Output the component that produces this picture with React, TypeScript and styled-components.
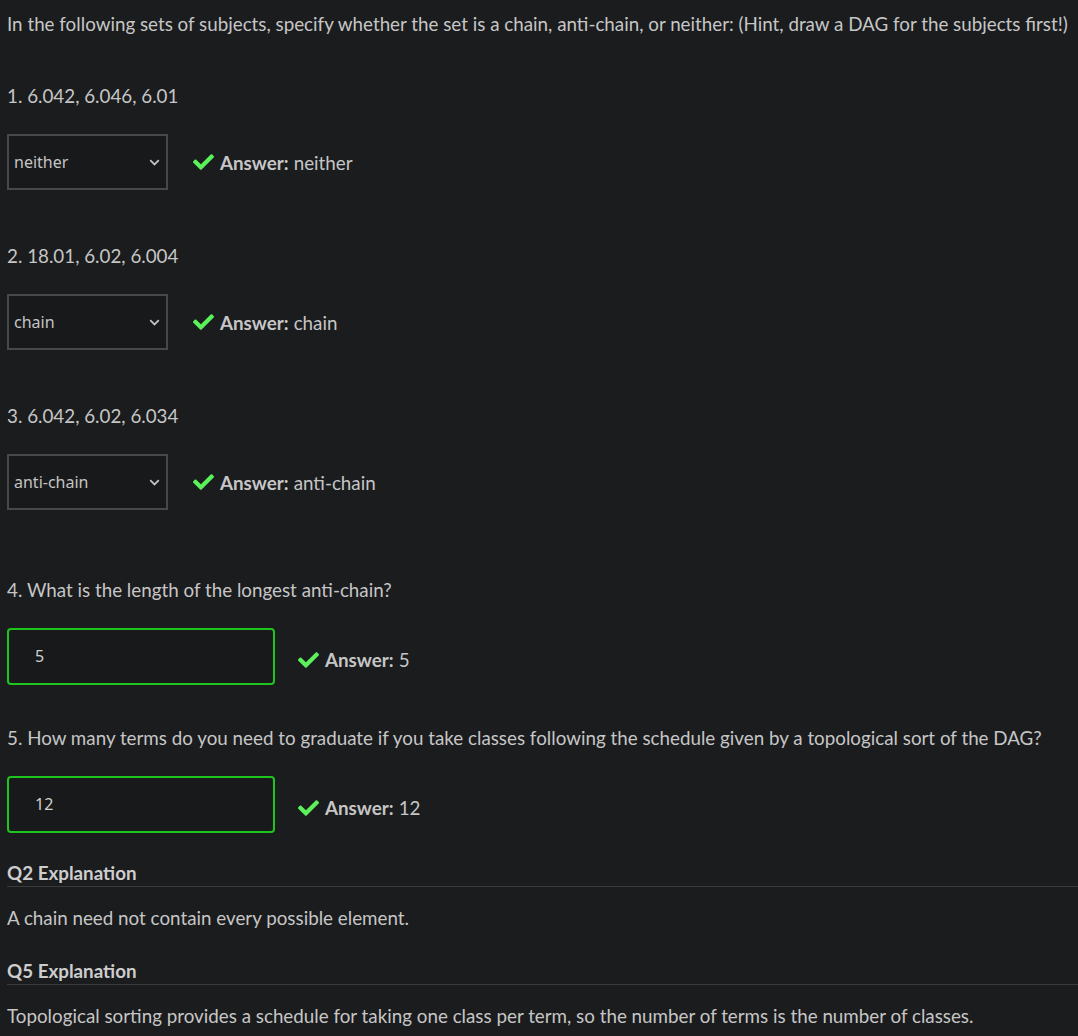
import { createGlobalStyle } from "styled-components";
import styled from "styled-components";

const GlobalStyle = createGlobalStyle`
  html, body {
    margin: 0;
    padding: 0;
    background: #1b1c1e;
  }
  body {
    font-family: Lato, "Liberation Sans", sans-serif;
    color: #c6c6c6;
    overflow: hidden;
  }
`;

const Page = styled.div`
  padding: 10px 0 0 7px;
  font-size: 18.8px;
  line-height: 27px;
`;

const Intro = styled.p`
  margin: 0;
  white-space: nowrap;
`;

const Question = styled.div<{ $top: number }>`
  margin-top: ${(p) => p.$top}px;
`;

const Label = styled.div`
  margin-bottom: 25px;
  white-space: nowrap;
`;

const Row = styled.div<{ $gap: number }>`
  display: flex;
  align-items: center;
  gap: ${(p) => p.$gap}px;
`;

const SelectBox = styled.div`
  box-sizing: border-box;
  width: 161px;
  height: 56px;
  border: 2px solid #46494c;
  background: #18191b;
  display: flex;
  align-items: center;
  justify-content: space-between;
  padding: 0 6px 0 5px;
  font-family: "Noto Sans", sans-serif;
  font-size: 16px;
  color: #c4c4c4;
`;

const Chevron = styled.svg`
  width: 11px;
  height: 7px;
`;

const TextBox = styled.div`
  box-sizing: border-box;
  width: 268px;
  height: 57px;
  border: 2px solid #1ec51e;
  border-radius: 4px;
  background: #18191b;
  display: flex;
  align-items: center;
  padding-left: 26px;
  font-family: "Noto Sans", sans-serif;
  font-size: 16px;
  color: #d0d0d0;
`;

const Answer = styled.div<{ $shift?: number }>`
  display: flex;
  align-items: center;
  gap: 6px;
  margin-top: ${(p) => p.$shift ?? 0}px;
  b {
    font-weight: 700;
    margin-right: 5px;
  }
`;

const Check = styled.svg`
  width: 21px;
  height: 16px;
  fill: #5cf05c;
`;

const Heading = styled.div`
  margin-top: 26px;
  font-weight: 700;
  color: #cdcdcd;
  border-bottom: 1px solid #3a3b3e;
`;

const Explanation = styled.p`
  margin: 17px 0 0;
  white-space: nowrap;
`;

function Select({ value }: { value: string }) {
  return (
    <SelectBox>
      <span>{value}</span>
      <Chevron viewBox="0 0 11 7">
        <path d="M1.2 1.2l4.3 4.3 4.3-4.3" fill="none" stroke="#c2c2c2" strokeWidth="1.8" />
      </Chevron>
    </SelectBox>
  );
}

function Result({ text, shift }: { text: string; shift?: number }) {
  return (
    <Answer $shift={shift}>
      <Check viewBox="0 64 512 384">
        <path d="M173.898 439.404l-166.4-166.4c-9.997-9.997-9.997-26.206 0-36.204l36.203-36.204c9.997-9.998 26.207-9.998 36.204 0L192 312.69 432.095 72.596c9.997-9.997 26.207-9.997 36.204 0l36.203 36.204c9.997 9.997 9.997 26.206 0 36.204l-294.4 294.401c-9.998 9.997-26.207 9.997-36.204-.001z" />
      </Check>
      <span>
        <b>Answer:</b>
        {text}
      </span>
    </Answer>
  );
}

const choices = [
  { label: "1. 6.042, 6.046, 6.01", value: "neither" },
  { label: "2. 18.01, 6.02, 6.004", value: "chain" },
  { label: "3. 6.042, 6.02, 6.034", value: "anti-chain" },
];

export default function App() {
  return (
    <>
      <GlobalStyle />
      <Page>
        <Intro>
          In the following sets of subjects, specify whether the set is a chain,
          anti-chain, or neither: (Hint, draw a DAG for the subjects first!)
        </Intro>
        {choices.map((c, i) => (
          <Question key={c.label} $top={i === 0 ? 45 : 52}>
            <Label>{c.label}</Label>
            <Row $gap={25}>
              <Select value={c.value} />
              <Result text={c.value} />
            </Row>
          </Question>
        ))}
        <Question $top={66}>
          <Label>4. What is the length of the longest anti-chain?</Label>
          <Row $gap={23}>
            <TextBox>5</TextBox>
            <Result text="5" shift={6} />
          </Row>
        </Question>
        <Question $top={39}>
          <Label>
            5. How many terms do you need to graduate if you take classes
            following the schedule given by a topological sort of the DAG?
          </Label>
          <Row $gap={23}>
            <TextBox>12</TextBox>
            <Result text="12" shift={6} />
          </Row>
        </Question>
        <Heading>Q2 Explanation</Heading>
        <Explanation>A chain need not contain every possible element.</Explanation>
        <Heading>Q5 Explanation</Heading>
        <Explanation>
          Topological sorting provides a schedule for taking one class per term,
          so the number of terms is the number of classes.
        </Explanation>
      </Page>
    </>
  );
}
